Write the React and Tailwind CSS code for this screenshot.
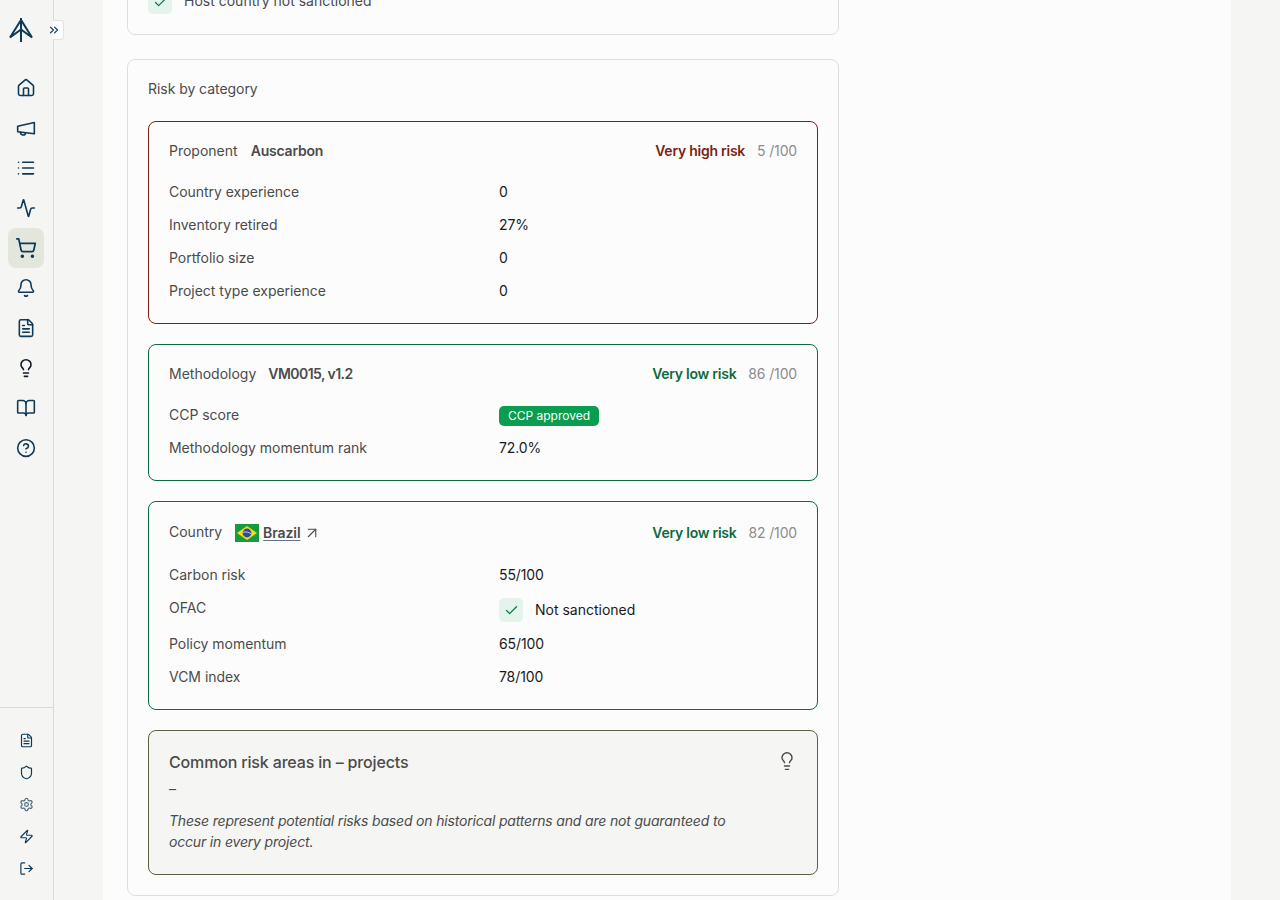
import React from "react";
import {
  ArrowUpRight, Activity, Bell, BookOpen, Check, ChevronsRight, CircleHelp, FileText, House,
  Lightbulb, List, LogOut, Settings, Shield, ShoppingCart, Zap,
} from "lucide-react";

// lucide's megaphone leans the wrong way, the reference one is a flat horn
function Horn({ size = 20, strokeWidth = 2, className }) {
  return (
    <svg width={size} height={size} viewBox="0 0 24 24" fill="none" stroke="currentColor" strokeWidth={strokeWidth} strokeLinejoin="round" strokeLinecap="round" className={className}>
      <path d="M2 10 22 5.5V19L2 16.5Z" />
      <path d="M5.5 17a3 3 0 0 0 6 .8" />
    </svg>
  );
}

const NAV = [
  { icon: House },
  { icon: Horn },
  { icon: List },
  { icon: Activity },
  { icon: ShoppingCart, active: true },
  { icon: Bell },
  { icon: FileText },
  { icon: Lightbulb, color: "text-[#111827]" },
  { icon: BookOpen },
  { icon: CircleHelp },
];
const FOOT = [FileText, Shield, Settings, Zap, LogOut];

function Logo() {
  return (
    <svg width="26" height="26" viewBox="0 0 26 26" fill="none" stroke="#0f3a57" strokeWidth="2">
      <path d="M13 1v24" />
      <path d="M13 3 2 20.5 13 12.5 24 20.5Z" strokeLinejoin="miter" />
    </svg>
  );
}

function BrazilFlag() {
  return (
    <svg width="24" height="18" viewBox="0 0 24 18" className="shrink-0">
      <rect width="24" height="18" fill="#169b3e" />
      <path d="M12 2 22 9 12 16 2 9Z" fill="#f7d917" />
      <circle cx="12" cy="9" r="4.4" fill="#2b4a9b" />
      <path d="M7.8 8.2c3-.6 6-.1 8.3 1.6" stroke="#fff" strokeWidth=".7" fill="none" />
    </svg>
  );
}

function Sidebar() {
  return (
    <aside className="relative flex h-[900px] w-[54px] shrink-0 flex-col border-r border-[#d9d9d6]">
      <div className="flex h-[60px] items-center pl-[8px]">
        <Logo />
      </div>
      <div className="absolute left-[53px] top-[20px] flex h-[20px] w-[11px] items-center rounded-r-[4px] border border-l-0 border-[#e2e2df] bg-[#fcfcfc]">
        <ChevronsRight size={14} strokeWidth={2} className="-ml-[6px] shrink-0 text-[#0f3a57]" />
      </div>
      <nav className="mt-[8px] flex flex-col items-start pl-[8px]">
        {NAV.map(({ icon: Icon, active, color }, i) => (
          <div
            key={i}
            className={`flex h-[40px] w-[36px] items-center justify-center rounded-lg ${active ? "bg-[#e3e6dc]" : ""}`}
          >
            <Icon size={active ? 22 : 20} strokeWidth={1.9} className={color || "text-[#0f3a57]"} />
          </div>
        ))}
      </nav>
      <div className="mt-auto flex h-[193px] flex-col items-start border-t border-[#d9d9d6] pl-[18px] pt-[16px]">
        {FOOT.map((Icon, i) => (
          <div key={i} className="flex h-[32px] w-[16px] items-center justify-center">
            <Icon size={15} strokeWidth={1.9} className={Icon === Settings ? "text-[#4d6b80]" : "text-[#0f3a57]"} />
          </div>
        ))}
      </div>
    </aside>
  );
}

function CheckBadge() {
  return (
    <span className="flex h-[24px] w-[24px] shrink-0 items-center justify-center rounded-[5px] bg-[#e4f3ec]">
      <Check size={15} strokeWidth={2} className="text-[#0a7a45]" />
    </span>
  );
}

function Row({ label, children }) {
  return (
    <div className="flex h-[21px] items-center leading-[21px]">
      <span className="w-[330px] shrink-0 tracking-[-0.03px] text-[#4b4b4b]">{label}</span>
      <span className="tracking-[-0.1px] text-[#1a1a1a]">{children}</span>
    </div>
  );
}

function Head({ label, name, risk, riskColor, score }) {
  return (
    <div className="flex h-[20px] items-center justify-between">
      <div className="flex items-center gap-[12px]">
        <span className="text-[#4b4b4b]">{label}</span>
        {name}
      </div>
      <div className="flex items-center gap-[12px]">
        <span className={`font-semibold tracking-[-0.25px] ${riskColor}`}>{risk}</span>
        <span className="tracking-[-0.15px] text-[#8c8c8c]">{score}</span>
      </div>
    </div>
  );
}

function RiskBox({ border, children, className }) {
  return <section className={`rounded-lg border px-[20px] ${border} ${className}`}>{children}</section>;
}

const nameClass = "font-semibold text-[#4b4b4b]";

export default function App() {
  return (
    <div className="flex h-[900px] w-[1280px] overflow-hidden bg-[#f5f5f3] text-[14px] font-['Inter',sans-serif]">
      <Sidebar />
      <main className="ml-[49px] h-[900px] w-[1128px] overflow-hidden bg-[#fcfcfc] pl-[24px]">
        <div className="mt-[-60px] flex h-[95px] w-[712px] items-end rounded-lg border border-[#dededb] px-[20px] pb-[20px]">
          <div className="flex items-center gap-[12px]">
            <CheckBadge />
            <span className="mb-[3px] text-[#4b4b4b]">Host country not sanctioned</span>
          </div>
        </div>

        <div className="mt-[24px] flex w-[712px] flex-col gap-[20px] rounded-lg border border-[#dededb] px-[20px] pb-[20px] pt-[18px]">
          <h2 className="mb-[1px] h-[22px] font-normal leading-[22px] tracking-[-0.05px] text-[#4b4b4b]">Risk by category</h2>

          <RiskBox border="border-[#7d1f14]" className="h-[203px] pt-[18px]">
            <Head
              label="Proponent"
              name={<span className={`ml-[1px] tracking-[-0.2px] ${nameClass}`}>Auscarbon</span>}
              risk="Very high risk"
              riskColor="text-[#7d1f14]"
              score="5 /100"
            />
            <div className="mt-[21px] flex flex-col gap-[12px]">
              <Row label="Country experience">0</Row>
              <Row label="Inventory retired">27%</Row>
              <Row label="Portfolio size">0</Row>
              <Row label="Project type experience">0</Row>
            </div>
          </RiskBox>

          <RiskBox border="border-[#0c6a40]" className="h-[137px] pt-[18px]">
            <Head
              label="Methodology"
              name={<span className={`tracking-[-0.55px] ${nameClass}`}>VM0015, v1.2</span>}
              risk="Very low risk"
              riskColor="text-[#0c6a40]"
              score="86 /100"
            />
            <div className="mt-[21px] flex flex-col gap-[12px]">
              <Row label="CCP score">
                <span className="block h-[20px] w-[100px] translate-y-px rounded-[5px] bg-[#0a9d50] text-center text-[12px] leading-[20px] tracking-normal text-white">
                  CCP approved
                </span>
              </Row>
              <Row label="Methodology momentum rank">72.0%</Row>
            </div>
          </RiskBox>

          <RiskBox border="border-[#0c6a40]" className="h-[209px] pt-[20px]">
            <Head
              label={<span className="relative -top-[1px]">Country</span>}
              name={
                <span className="ml-[1px] flex items-center gap-[4px]">
                  <span className="flex translate-y-px"><BrazilFlag /></span>
                  <span className="font-semibold tracking-[-0.1px] text-[#4b4b4b] underline decoration-[#64748b] underline-offset-2">Brazil</span>
                  <ArrowUpRight size={18} strokeWidth={1.5} className="-ml-[1px] translate-y-px text-[#4b4b4b]" />
                </span>
              }
              risk="Very low risk"
              riskColor="text-[#0c6a40]"
              score="82 /100"
            />
            <div className="mt-[22px] flex flex-col">
              <Row label="Carbon risk">55/100</Row>
              <div className="mt-[12px] flex h-[24px] items-start">
                <span className="w-[330px] shrink-0 leading-[21px] text-[#4b4b4b]">OFAC</span>
                <span className="flex items-center gap-[12px] pt-[1px] text-[#1a1a1a]">
                  <CheckBadge />
                  <span className="-translate-y-px">Not sanctioned</span>
                </span>
              </div>
              <div className="mt-[12px] flex flex-col gap-[12px]">
                <Row label="Policy momentum">65/100</Row>
                <Row label="VCM index">78/100</Row>
              </div>
            </div>
          </RiskBox>

          <RiskBox border="border-[#5a6145] bg-[#f5f5f3]" className="relative h-[145px] pt-[19px]">
            <h3 className="h-[24px] text-[16px] font-medium leading-[24px] tracking-[-0.16px] text-[#4b4b4b]">Common risk areas in – projects</h3>
            <p className="mt-[4px] h-[21px] leading-[21px] text-[#4b4b4b]">–</p>
            <p className="mt-[11px] w-[570px] italic leading-[21px] tracking-[-0.18px] text-[#4b4b4b]">
              These represent potential risks based on historical patterns and are not guaranteed to occur in every project.
            </p>
            <Lightbulb size={20} strokeWidth={1.7} className="absolute right-[20px] top-[20px] text-[#4b4b4b]" />
          </RiskBox>
        </div>
      </main>
    </div>
  );
}
